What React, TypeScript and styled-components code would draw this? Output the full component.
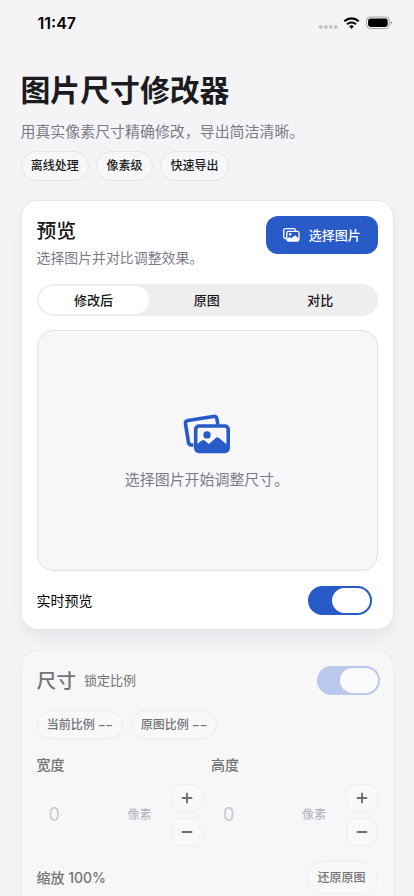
import React from "react";
import styled, { createGlobalStyle } from "styled-components";

const Global = createGlobalStyle`
  * { box-sizing: border-box; }
  html, body { margin: 0; background: #f4f4f7; overflow: hidden; }
  body { font-family: Inter, "Noto Sans CJK SC", sans-serif; color: #1b1b20; }
  button { font: inherit; color: inherit; margin: 0; }
`;

const Screen = styled.main`
  width: 414px;
  height: 896px;
  overflow: hidden;
  background: #f4f4f7;
`;

const StatusBar = styled.header`
  height: 46px;
  padding: 0 21px 0 37.5px;
  display: flex;
  align-items: center;
  justify-content: space-between;
`;

const Clock = styled.span`
  font-size: 16px;
  line-height: 20px;
  font-weight: 600;
  color: #000;
`;

const StatusIcons = styled.svg`
  display: block;
`;

const Page = styled.div`
  padding: 22px 20.5px 0;
  display: flex;
  flex-direction: column;
`;

const Title = styled.h1`
  margin: 0;
  font-size: 29.85px;
  line-height: 44px;
  font-weight: 700;
`;

const Subtitle = styled.p`
  margin: 9px 0 0;
  font-size: 14.95px;
  line-height: 22px;
  color: #7b7b86;
`;

const ChipRow = styled.div<{ $top: number }>`
  display: flex;
  gap: 7.5px;
  margin-top: ${(p) => p.$top}px;
`;

const Chip = styled.span`
  height: 29.5px;
  padding: 1px 9.2px 0;
  display: flex;
  align-items: center;
  border: 1px solid #e4e4ea;
  border-radius: 15px;
  background: #f7f7fa;
  font-size: 12px;
  line-height: 18px;
  font-weight: 500;
  white-space: nowrap;
`;

const Card = styled.section<{ $height: number; $muted?: boolean }>`
  margin: ${(p) => (p.$muted ? 20 : 19.5)}px 0 0;
  height: ${(p) => p.$height}px;
  padding: 15px;
  border: 1px solid ${(p) => (p.$muted ? "#eeeef1" : "#e6e6ec")};
  border-radius: 17px;
  background: ${(p) => (p.$muted ? "#f7f7f7" : "#fff")};
  box-shadow: 0 7px 16px rgba(20, 20, 35, ${(p) => (p.$muted ? 0.035 : 0.06)});
  color: ${(p) => (p.$muted ? "#747476" : "#17171b")};
`;

const Between = styled.div<{ $align?: string; $height: number }>`
  display: flex;
  justify-content: space-between;
  align-items: ${(p) => p.$align ?? "center"};
  height: ${(p) => p.$height}px;
`;

const Heading = styled.h2`
  margin: 0;
  padding-top: 1px;
  font-size: 19.8px;
  line-height: 28px;
  font-weight: 500;
`;

const Description = styled.p`
  margin: 2px 0 0;
  font-size: 13.9px;
  line-height: 22px;
  color: #7b7b86;
`;

const PrimaryButton = styled.button`
  width: 111.5px;
  height: 38px;
  padding: 0;
  display: flex;
  align-items: center;
  justify-content: center;
  gap: 9px;
  border: 0;
  border-radius: 12px;
  background: #285ac8;
  color: #fff;
  font-size: 13px;
  line-height: 20px;
  font-weight: 500;
`;

const Segments = styled.div`
  margin-top: 14px;
  height: 31.5px;
  padding: 2px;
  display: grid;
  grid-template-columns: 110px 1fr 1fr;
  gap: 3px;
  border-radius: 16px;
  background: #eee;
`;

const Segment = styled.button<{ $active?: boolean }>`
  border: 0;
  padding: 0;
  border-radius: 14px;
  background: ${(p) => (p.$active ? "#fff" : "transparent")};
  font-size: 13px;
  line-height: 20px;
  font-weight: 500;
`;

const DropArea = styled.div`
  margin-top: 14.5px;
  height: 240.5px;
  padding-top: 6px;
  display: flex;
  flex-direction: column;
  align-items: center;
  justify-content: center;
  gap: 14px;
  border: 1px solid #e2e2e8;
  border-radius: 16px;
  background: #f7f7fa;
  font-size: 14.95px;
  line-height: 24px;
  color: #7b7b86;
`;

const LiveRow = styled(Between)`
  padding-right: 6px;
`;

const Label = styled.span`
  font-size: 14px;
  line-height: 22px;
  font-weight: 500;
`;

const LightLabel = styled(Label)`
  font-weight: 400;
  color: #000;
`;

const LockRow = styled(Between)`
  margin-right: -2.5px;
`;

const HeadingGroup = styled.div`
  display: flex;
  align-items: center;
  gap: 8px;
`;

const LockLabel = styled.span`
  font-size: 13px;
  line-height: 20px;
`;

const Track = styled.span<{ $muted?: boolean }>`
  width: 63.5px;
  height: 28.5px;
  padding: 2px;
  display: flex;
  justify-content: flex-end;
  border-radius: 15px;
  background: ${(p) => (p.$muted ? "#b9c8eb" : "#285ac8")};
`;

const Knob = styled.span<{ $muted?: boolean }>`
  width: 38px;
  height: 24.5px;
  border-radius: 13px;
  background: ${(p) => (p.$muted ? "#fafafa" : "#fff")};
`;

const MutedChip = styled(Chip)`
  border-color: #ececf1;
  background: #f8f8fb;
`;

const Dashes = styled.span`
  margin: 0 0 0 3px;
  font-family: Inter, sans-serif;
  letter-spacing: -0.4px;
`;

const Fields = styled.div`
  margin-top: 15px;
  display: grid;
  grid-template-columns: 166.5px 166.5px;
  gap: 8px;
`;

const Field = styled.div`
  display: flex;
  flex-direction: column;
  gap: 7px;
`;

const FieldBody = styled.div`
  height: 63px;
  display: flex;
  align-items: center;
  justify-content: space-between;
`;

const NumberInput = styled.div`
  width: 126px;
  height: 46px;
  padding: 0 11px 0 12px;
  display: flex;
  align-items: center;
  justify-content: space-between;
  border-radius: 12px;
  background: #f7f7f9;
`;

const Zero = styled.span`
  font-size: 18px;
  line-height: 24px;
  color: #c9c9cc;
`;

const Unit = styled.span`
  font-size: 12px;
  line-height: 18px;
  color: #b2b2b9;
`;

const Stepper = styled.div`
  display: flex;
  flex-direction: column;
  gap: 6px;
`;

const StepButton = styled.button`
  width: 32px;
  height: 28px;
  padding: 0;
  display: flex;
  align-items: center;
  justify-content: center;
  border: 1px solid #efeff3;
  border-radius: 10px;
  background: #f8f8fa;
`;

const ScaleRow = styled(Between)`
  margin-top: 15px;
`;

const ResetButton = styled.button`
  width: 72px;
  height: 33px;
  padding: 0;
  border: 1px solid #efeff3;
  border-radius: 17px;
  background: #f8f8fa;
  font-size: 12px;
  line-height: 18px;
  font-weight: 500;
`;

function StatusGlyphs() {
  return (
    <StatusIcons width="76" height="16" viewBox="0 0 76 16">
      <g fill="#c3c3c6">
        <circle cx="3.8" cy="12" r="1.9" />
        <circle cx="8.8" cy="12" r="1.9" />
        <circle cx="13.8" cy="12" r="1.9" />
        <circle cx="18.8" cy="12" r="1.9" />
      </g>
      <g fill="none" stroke="#000" strokeWidth="2.2">
        <path d="M27.3 6.2a10.6 10.6 0 0 1 14.4 0" />
        <path d="M30.1 9.2a6.5 6.5 0 0 1 8.8 0" />
      </g>
      <path d="M32.2 11.3a3.4 3.4 0 0 1 4.6 0L34.5 13.7z" fill="#000" />
      <rect x="49.5" y="2" width="22.8" height="11.6" rx="3.8" fill="none" stroke="#a5a5a8" />
      <rect x="51.1" y="3.6" width="19.6" height="8.4" rx="2.4" fill="#000" />
      <path d="M73.7 5.9c1.9.5 1.9 3.3 0 3.8z" fill="#a5a5a8" />
    </StatusIcons>
  );
}

function SmallPhotos() {
  return (
    <svg width="17" height="15" viewBox="0 0 17 15" fill="none" stroke="currentColor" strokeWidth="1.3">
      <path d="M3.3 10.5H2.4A1.7 1.7 0 0 1 .7 8.8V2.4A1.7 1.7 0 0 1 2.4.7h8.5a1.7 1.7 0 0 1 1.7 1.7v.5" />
      <rect x="3.8" y="3.3" width="12.2" height="9.7" rx="1.7" />
      <circle cx="7.2" cy="6.3" r="1.2" fill="currentColor" stroke="none" />
      <path d="M4 11l2.5-2.1 1.8 1.4 3.7-3.1 4 3.2v1.5q0 1-1.2 1H5.4Q4 13 4 12z" fill="currentColor" stroke="none" />
    </svg>
  );
}

function LargePhotos() {
  return (
    <svg width="48" height="40" viewBox="0 0 48 40" fill="none">
      <path
        d="M11 31H9.2q-2.7.3-3.2-2.5L3 9.9Q2.6 7.1 5.4 6.6L30.7 2.5q3.2-.6 3.7 2.3l1 6"
        transform="translate(-0.5 0)"
        stroke="#285ac8"
        strokeWidth="3.6"
      />
      <rect x="12.7" y="12" width="32.5" height="25.4" rx="3.3" fill="#f7f7fa" stroke="#285ac8" strokeWidth="3.6" />
      <circle cx="24" cy="20.9" r="3.7" fill="#285ac8" />
      <path
        d="M12.5 31.3l6.3-4.9q1.5-1 3 .2l4 3.4 7-6.1q1.6-1.2 3.2.1l9.3 7.7v3q0 2.8-3 2.8H15.5q-3 0-3-2.8z"
        fill="#285ac8"
      />
    </svg>
  );
}

function Toggle({ muted = false }: { muted?: boolean }) {
  return (
    <Track $muted={muted} role="switch" aria-checked="true">
      <Knob $muted={muted} />
    </Track>
  );
}

function DimensionField({ label }: { label: string }) {
  return (
    <Field>
      <Label>{label}</Label>
      <FieldBody>
        <NumberInput>
          <Zero>0</Zero>
          <Unit>像素</Unit>
        </NumberInput>
        <Stepper>
          <StepButton aria-label="+">
            <svg width="12" height="12" viewBox="0 0 12 12" stroke="#6f6f72" strokeWidth="1.9" strokeLinecap="round">
              <path d="M1.5 6h9M6 1.5v9" />
            </svg>
          </StepButton>
          <StepButton aria-label="-">
            <svg width="12" height="12" viewBox="0 0 12 12" stroke="#6f6f72" strokeWidth="1.9" strokeLinecap="round">
              <path d="M1.5 6h9" />
            </svg>
          </StepButton>
        </Stepper>
      </FieldBody>
    </Field>
  );
}

export default function App() {
  return (
    <Screen>
      <Global />
      <StatusBar>
        <Clock>11:47</Clock>
        <StatusGlyphs />
      </StatusBar>
      <Page>
        <Title>图片尺寸修改器</Title>
        <Subtitle>用真实像素尺寸精确修改，导出简洁清晰。</Subtitle>
        <ChipRow $top={8}>
          <Chip>离线处理</Chip>
          <Chip>像素级</Chip>
          <Chip>快速导出</Chip>
        </ChipRow>

        <Card $height={430}>
          <Between $height={54} $align="flex-start">
            <div>
              <Heading>预览</Heading>
              <Description>选择图片并对比调整效果。</Description>
            </div>
            <PrimaryButton>
              <SmallPhotos />
              选择图片
            </PrimaryButton>
          </Between>
          <Segments>
            <Segment $active>修改后</Segment>
            <Segment>原图</Segment>
            <Segment>对比</Segment>
          </Segments>
          <DropArea>
            <LargePhotos />
            选择图片开始调整尺寸。
          </DropArea>
          <LiveRow $height={60}>
            <LightLabel>实时预览</LightLabel>
            <Toggle />
          </LiveRow>
        </Card>

        <Card $height={290} $muted>
          <LockRow $height={28.5}>
            <HeadingGroup>
              <Heading>尺寸</Heading>
              <LockLabel>锁定比例</LockLabel>
            </HeadingGroup>
            <Toggle muted />
          </LockRow>
          <ChipRow $top={15}>
            <MutedChip>
              当前比例<Dashes>−−</Dashes>
            </MutedChip>
            <MutedChip>
              原图比例<Dashes>−−</Dashes>
            </MutedChip>
          </ChipRow>
          <Fields>
            <DimensionField label="宽度" />
            <DimensionField label="高度" />
          </Fields>
          <ScaleRow $height={33}>
            <Label>缩放 100%</Label>
            <ResetButton>还原原图</ResetButton>
          </ScaleRow>
        </Card>
      </Page>
    </Screen>
  );
}
